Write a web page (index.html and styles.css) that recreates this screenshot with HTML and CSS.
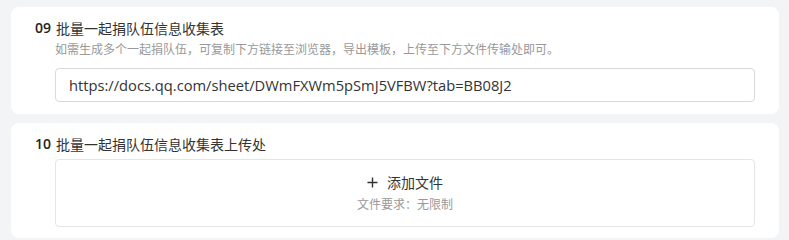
FILE: index.html
```html
<!DOCTYPE html>
<html lang="zh-CN">
<head>
<meta charset="utf-8">
<title>批量一起捐</title>
<link rel="stylesheet" href="styles.css">
</head>
<body>
<div class="page">
  <section class="card">
    <div class="title"><span class="num">09</span><span class="label">批量一起捐队伍信息收集表</span></div>
    <div class="body">
      <div class="desc">如需生成多个一起捐队伍，可复制下方链接至浏览器，导出模板，上传至下方文件传输处即可。</div>
      <div class="input">https://docs.qq.com/sheet/DWmFXWm5pSmJ5VFBW?tab=BB08J2</div>
    </div>
  </section>
  <section class="card card-upload">
    <div class="title"><span class="num">10</span><span class="label">批量一起捐队伍信息收集表上传处</span></div>
    <div class="body">
      <div class="upload">
        <div class="add">
          <svg class="plus" width="11" height="11" viewBox="0 0 11 11"><path d="M5.5 0.5v10M0.5 5.5h10" stroke="#333" stroke-width="1.4" fill="none"/></svg>
          <span>添加文件</span>
        </div>
        <div class="req">文件要求：无限制</div>
      </div>
    </div>
  </section>
</div>
</body>
</html>
```
FILE: styles.css
```css
* { box-sizing: border-box; }
html, body { margin: 0; padding: 0; }
body {
  background: #f3f4f6;
  font-family: "Open Sans", "Noto Sans CJK SC", sans-serif;
  color: #333;
}
.page {
  padding: 7px 10px 0 11px;
  display: flex;
  flex-direction: column;
  gap: 9px;
}
.card {
  background: #fff;
  border-radius: 8px;
  padding: 10px 24px 12px 24px;
}
.card-upload { padding-bottom: 11px; }
.title {
  display: flex;
  align-items: center;
  height: 22px;
  font-size: 14px;
  line-height: 22px;
}
.num {
  font-weight: 600;
  width: 21px;
  color: #222;
}
.label {
  font-family: "Noto Sans CJK SC", sans-serif;
  color: #333;
}
.body { padding-left: 20px; }
.desc {
  font-family: "Noto Sans CJK SC", sans-serif;
  font-size: 12px;
  line-height: 18px;
  color: #999;
  margin-top: 1px;
}
.input {
  margin-top: 10px;
  height: 34px;
  width: 700px;
  border: 1px solid #d9d9d9;
  border-radius: 4px;
  padding: 0 13px;
  font-size: 14.7px;
  line-height: 32px;
  color: #333;
}
.upload {
  margin-top: 4px;
  width: 700px;
  height: 68px;
  border: 1px solid #e6e6e6;
  border-radius: 4px;
  display: flex;
  flex-direction: column;
  align-items: center;
  justify-content: center;
  gap: 3px;
  font-family: "Noto Sans CJK SC", sans-serif;
  padding-bottom: 2px;
}
.add {
  display: flex;
  align-items: center;
  gap: 9px;
  font-size: 14px;
  line-height: 20px;
  color: #333;
}
.plus { display: block; }
.req {
  font-size: 12px;
  line-height: 17px;
  color: #999;
}
```
